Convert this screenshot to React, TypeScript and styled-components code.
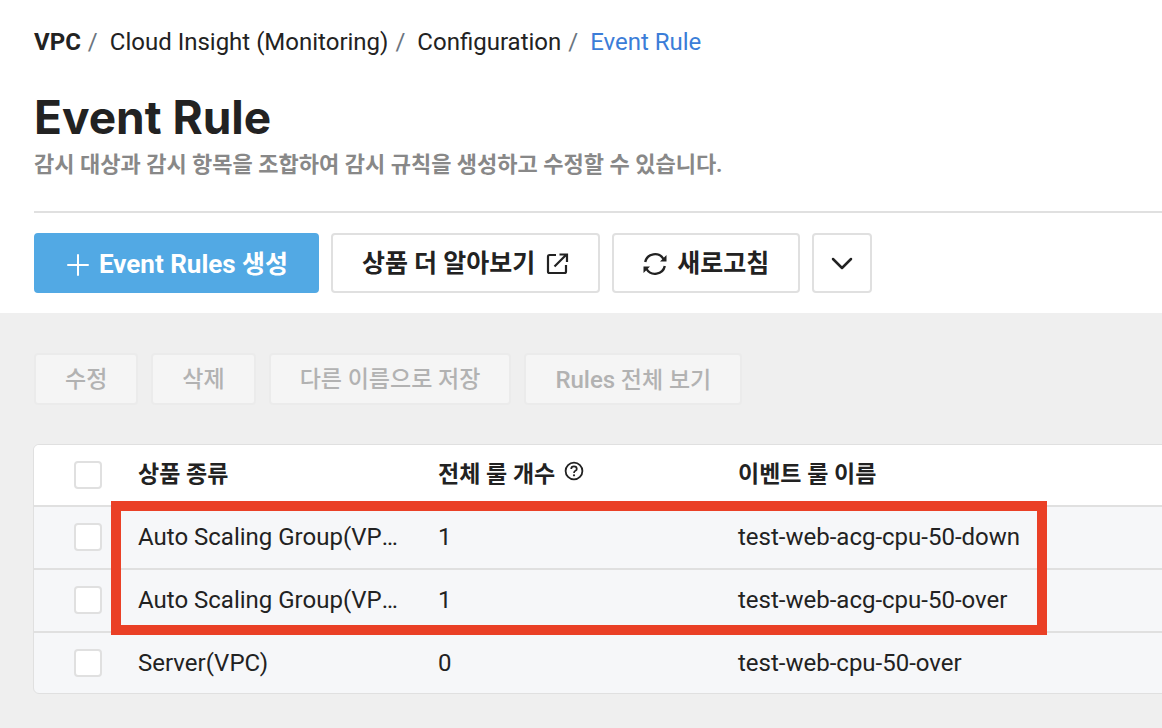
import React from "react";
import styled, { createGlobalStyle, css } from "styled-components";

const GlobalStyle = createGlobalStyle`
  * { box-sizing: border-box; }
  body {
    margin: 0;
    min-height: 100vh;
    background: #efefef;
    color: #222;
    font-family: Roboto, "Noto Sans CJK KR", sans-serif;
    font-size: 24px;
    line-height: 32px;
  }
`;

const Page = styled.div`
  overflow: hidden;
`;

const Header = styled.header`
  background: #fff;
  padding: 26px 0 20px 34px;
`;

const Crumbs = styled.ol`
  display: flex;
  list-style: none;
  margin: 0;
  padding: 0;
`;

const Crumb = styled.li`
  & + &::before {
    content: "/";
    color: #6b7580;
    margin: 0 12px 0 7px;
  }
`;

const CrumbLink = styled.a<{ $tone?: "root" | "current" }>`
  color: ${(p) => (p.$tone === "current" ? "#3b7dd8" : "inherit")};
  font-weight: ${(p) => (p.$tone === "root" ? 700 : 400)};
  text-decoration: none;
`;

const Title = styled.h1`
  margin: 29px 0 0;
  font-family: Inter, "Noto Sans CJK KR", sans-serif;
  font-size: 46px;
  font-weight: 700;
  line-height: 60px;
`;

const Subtitle = styled.p`
  margin: 2px 0 0;
  color: #888;
  font-size: 22px;
  font-weight: 700;
`;

const Toolbar = styled.div`
  display: flex;
  gap: 12px;
  margin-top: 30px;
  padding-top: 20px;
  border-top: 2px solid #e0e0e0;
`;

const ToolButton = styled.button<{ $primary?: boolean; $square?: boolean }>`
  display: flex;
  align-items: center;
  justify-content: center;
  gap: 10px;
  height: 60px;
  padding: 2px 29px 0;
  border: 2px solid #e0e0e0;
  border-radius: 4px;
  background: #fff;
  color: #222;
  font: inherit;
  font-size: 25px;
  font-weight: 700;
  white-space: nowrap;
  ${(p) => p.$primary && css`
    border-color: #52a9e4;
    background: #52a9e4;
    color: #fff;
  `}
  ${(p) => p.$square && css`
    width: 60px;
    padding: 0;
  `}
`;

const Latin = styled.span<{ $size: number }>`
  font-size: ${(p) => p.$size}px;
`;

const Icon = styled.svg`
  flex: none;
  fill: none;
  stroke: currentColor;
  stroke-width: 2;
`;

const Content = styled.main`
  padding: 40px 0 34px 34px;
`;

const Actions = styled.div`
  display: flex;
  gap: 13px;
`;

const ActionButton = styled.button`
  height: 52px;
  padding: 2px 29px 0;
  border: 2px solid #ebebeb;
  border-radius: 4px;
  background: #f5f5f5;
  color: #b2b2b2;
  font: inherit;
  font-size: 23px;
  font-weight: 500;
  white-space: nowrap;
`;

const Card = styled.div`
  position: relative;
  margin: 39px -8px 0 -1px;
  border: 1px solid #e0e0e0;
  border-radius: 6px;
  background: #f6f7f9;
`;

const Table = styled.table`
  width: 100%;
  border-collapse: separate;
  border-spacing: 0;
  table-layout: fixed;
`;

const cell = css`
  height: 63px;
  padding: 0 20px 1px;
  overflow: hidden;
  text-align: left;
  text-overflow: ellipsis;
  white-space: nowrap;
`;

const HeadCell = styled.th`
  ${cell}
  height: 62px;
  padding-bottom: 0;
  background: #fff;
  border-bottom: 2px solid #e0e0e0;
  font-size: 23px;
  font-weight: 700;
  &:first-child {
    padding-left: 40px;
    padding-right: 0;
    border-top-left-radius: 5px;
  }
`;

const Cell = styled.td`
  ${cell}
  border-bottom: 2px solid #e0e0e0;
  &:first-child {
    padding-left: 40px;
    padding-right: 0;
  }
  tr:last-child > & {
    height: 60px;
    padding-bottom: 0;
    border-bottom: 0;
  }
`;

const HeadLabel = styled.span`
  display: flex;
  align-items: center;
  gap: 9px;
`;

const HelpButton = styled.button`
  display: flex;
  align-self: flex-start;
  padding: 2px 0 0;
  border: 0;
  background: none;
  color: inherit;
`;

const Check = styled.input`
  appearance: none;
  display: block;
  width: 28px;
  height: 28px;
  margin: 0;
  border: 2px solid #e0e0e0;
  border-radius: 4px;
  background: #fff;
  &:checked {
    background: #52a9e4;
  }
`;

const Highlight = styled.div`
  position: absolute;
  top: 56px;
  left: 77px;
  width: 936px;
  height: 134px;
  border: 10px solid #ea4026;
  pointer-events: none;
`;

const rules = [
  { product: "Auto Scaling Group(VPC)", count: 1, name: "test-web-acg-cpu-50-down" },
  { product: "Auto Scaling Group(VPC)", count: 1, name: "test-web-acg-cpu-50-over" },
  { product: "Server(VPC)", count: 0, name: "test-web-cpu-50-over" },
];

export default function App() {
  return (
    <Page>
      <GlobalStyle />
      <Header>
        <nav aria-label="Breadcrumb">
          <Crumbs>
            <Crumb><CrumbLink href="#" $tone="root">VPC</CrumbLink></Crumb>
            <Crumb><CrumbLink href="#">Cloud Insight (Monitoring)</CrumbLink></Crumb>
            <Crumb><CrumbLink href="#">Configuration</CrumbLink></Crumb>
            <Crumb><CrumbLink href="#" $tone="current" aria-current="page">Event Rule</CrumbLink></Crumb>
          </Crumbs>
        </nav>
        <Title>Event Rule</Title>
        <Subtitle>감시 대상과 감시 항목을 조합하여 감시 규칙을 생성하고 수정할 수 있습니다.</Subtitle>
        <Toolbar>
          <ToolButton type="button" $primary>
            <Icon width="24" height="24" viewBox="0 0 24 24" strokeLinecap="round" aria-hidden="true">
              <path d="M13 3v20M3 13h20" />
            </Icon>
            <span><Latin $size={26}>Event Rules</Latin> 생성</span>
          </ToolButton>
          <ToolButton type="button">
            상품 더 알아보기
            <Icon width="24" height="24" viewBox="0 0 24 24" aria-hidden="true">
              <path d="M11 3H4.500Q3 3 3 4.500V19.500Q3 21 4.500 21H19.500Q21 21 21 19.500V13M9.500 14.500L21.500 2.500M14.500 2.500H22V10" strokeWidth="2.200" />
            </Icon>
          </ToolButton>
          <ToolButton type="button">
            <Icon width="24" height="24" viewBox="0 0 24 24" aria-hidden="true">
              <path d="M2.200 10A10 10 0 0 1 20.500 7M21.800 14A10 10 0 0 1 3.500 17" strokeWidth="2.400" />
              <path d="M23.500 3V9.500H17ZM0.500 21V14.500H7Z" fill="currentColor" stroke="none" />
            </Icon>
            새로고침
          </ToolButton>
          <ToolButton type="button" $square aria-label="More">
            <Icon width="24" height="24" viewBox="0 0 24 24" strokeLinecap="round" strokeLinejoin="round" aria-hidden="true">
              <path d="M3 8L12 17L21 8" strokeWidth="2.500" />
            </Icon>
          </ToolButton>
        </Toolbar>
      </Header>
      <Content>
        <Actions>
          <ActionButton type="button" disabled>수정</ActionButton>
          <ActionButton type="button" disabled>삭제</ActionButton>
          <ActionButton type="button" disabled>다른 이름으로 저장</ActionButton>
          <ActionButton type="button" disabled><Latin $size={24}>Rules</Latin> 전체 보기</ActionButton>
        </Actions>
        <Card>
          <Table>
            <colgroup>
              <col style={{ width: 84 }} />
              <col style={{ width: 300 }} />
              <col style={{ width: 300 }} />
              <col />
            </colgroup>
            <thead>
              <tr>
                <HeadCell scope="col"><Check type="checkbox" aria-label="Select all" /></HeadCell>
                <HeadCell scope="col">상품 종류</HeadCell>
                <HeadCell scope="col">
                  <HeadLabel>
                    전체 룰 개수
                    <HelpButton type="button" aria-label="Help">
                      <Icon width="20" height="20" viewBox="0 0 20 20" aria-hidden="true">
                        <circle cx="10" cy="10" r="8.400" strokeWidth="1.800" />
                        <path d="M7.200 8Q7.200 5.400 10 5.400T12.800 7.900Q12.800 9.100 11.400 9.800T10 12" strokeWidth="1.700" />
                        <circle cx="10" cy="14.300" r="1.100" fill="currentColor" stroke="none" />
                      </Icon>
                    </HelpButton>
                  </HeadLabel>
                </HeadCell>
                <HeadCell scope="col">이벤트 룰 이름</HeadCell>
              </tr>
            </thead>
            <tbody>
              {rules.map((rule) => (
                <tr key={rule.name}>
                  <Cell><Check type="checkbox" aria-label={`Select ${rule.name}`} /></Cell>
                  <Cell>{rule.product}</Cell>
                  <Cell>{rule.count}</Cell>
                  <Cell>{rule.name}</Cell>
                </tr>
              ))}
            </tbody>
          </Table>
          <Highlight />
        </Card>
      </Content>
    </Page>
  );
}
